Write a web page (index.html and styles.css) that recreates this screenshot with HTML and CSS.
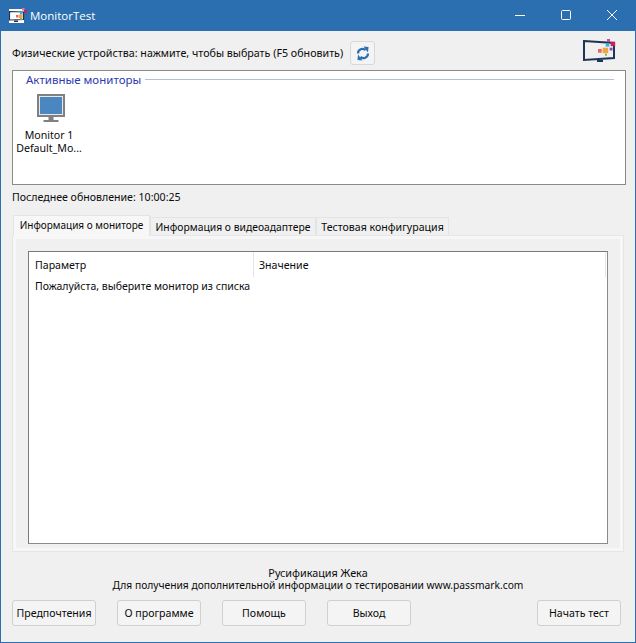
FILE: index.html
```html
<!DOCTYPE html>
<html lang="ru">
<head>
  <meta charset="UTF-8" />
  <title>MonitorTest</title>
  <link rel="stylesheet" href="styles.css">
</head>
<body>
  <div class="window">
    <header class="titlebar">
      <svg class="app-icon" width="18" height="16" viewBox="0 0 18 16">
        <rect x="0" y="1" width="15" height="14" fill="#fff"/>
        <path d="M.5 3.500l14 .5v7.500l-14 .5z" fill="#fff" stroke="#1f3557" stroke-width="1.200"/>
        <rect x="5" y="12.500" width="4" height="1.500" fill="#1f3557"/>
        <rect x="13" y="0" width="2.500" height="2.500" fill="#e070a8"/>
        <rect x="15" y="2" width="3" height="3" fill="#c9205c"/>
        <rect x="11" y="4" width="2.500" height="2.500" fill="#2fb0e8"/>
        <rect x="10" y="6.500" width="3.500" height="3.500" fill="#f2a445"/>
        <rect x="7" y="7" width="2.500" height="2.500" fill="#f0645c"/>
        <rect x="11" y="10" width="2" height="2" fill="#7cb944"/>
      </svg>
      <span class="app-title">MonitorTest</span>
      <div class="win-controls">
        <svg width="46" height="31" viewBox="0 0 46 31"><path d="M18 15.500h10" stroke="#fff" fill="none"/></svg>
        <svg width="46" height="31" viewBox="0 0 46 31"><rect x="18.500" y="10.500" width="9" height="9" rx="1" stroke="#fff" fill="none"/></svg>
        <svg width="46" height="31" viewBox="0 0 46 31"><path d="M18 10l10 10M28 10l-10 10" stroke="#fff" fill="none"/></svg>
      </div>
    </header>

    <main class="content">
      <div class="device-row">
        <span class="device-label">Физические устройства: нажмите, чтобы выбрать (F5 обновить)</span>
        <button class="refresh-btn">
          <svg width="14" height="15" viewBox="0 0 14 15">
            <path d="M2 7.500a4.500 4.500 0 0 1 7.500-3.400" fill="none" stroke="#2b6fb0" stroke-width="2.200"/>
            <path d="M7.500 .5l5 .5-.5 5.500z" fill="#2b6fb0"/>
            <path d="M12 7.500a4.500 4.500 0 0 1-7.500 3.400" fill="none" stroke="#2b6fb0" stroke-width="2.200"/>
            <path d="M6.500 14.500l-5-.5.5-5.500z" fill="#2b6fb0"/>
          </svg>
        </button>
        <svg class="brand-icon" width="33" height="24" viewBox="0 0 33 24">
          <path d="M1 2l30 2v15l-30 2z" fill="none" stroke="#1f3557" stroke-width="2"/>
          <rect x="14" y="21" width="6" height="2" fill="#1f3557"/>
          <rect x="24" y="0" width="3" height="3" fill="#d0498c"/>
          <rect x="27.700" y="2.700" width="4.500" height="4.500" fill="#c9205c"/>
          <rect x="22.700" y="4" width="3.600" height="3.600" fill="#2fb0e8"/>
          <rect x="26.700" y="8.700" width="2.800" height="2.800" fill="#8e4a9e"/>
          <rect x="19.700" y="8.700" width="5.500" height="5.500" fill="#f2a445"/>
          <rect x="15" y="10" width="3.700" height="3.700" fill="#f0645c"/>
          <rect x="22" y="14.700" width="2" height="2" fill="#7cb944"/>
        </svg>
      </div>

      <section class="monitors">
        <div class="group-title">
          <span>Активные мониторы</span>
          <div class="group-line"></div>
        </div>
        <div class="monitor-item">
          <svg width="30" height="30" viewBox="0 0 30 30">
            <rect x="1" y="1" width="26" height="21" fill="#4a86c0" stroke="#808080" stroke-width="2"/>
            <rect x="2.500" y="2.500" width="23" height="18" fill="none" stroke="#e8e8e8"/>
            <rect x="11.500" y="23" width="5" height="3" fill="#808080"/>
            <rect x="6.500" y="26" width="15" height="2" fill="#808080"/>
          </svg>
          <div>Monitor 1</div>
          <div>Default_Mo...</div>
        </div>
      </section>

      <div class="last-update">Последнее обновление: 10:00:25</div>

      <nav class="tabs">
        <div class="tab tab-monitor active">Информация о мониторе</div>
        <div class="tab tab-adapter">Информация о видеоадаптере</div>
        <div class="tab tab-config">Тестовая конфигурация</div>
      </nav>
      <section class="tab-pane">
        <div class="list">
          <div class="list-head">
            <div class="col-param">Параметр</div>
            <div class="col-value">Значение</div>
          </div>
          <div class="list-row">Пожалуйста, выберите монитор из списка</div>
        </div>
      </section>

      <div class="credits">
        <div class="credit-name">Русификация Жека</div>
        <div>Для получения дополнительной информации о тестировании www.passmark.com</div>
      </div>

      <div class="buttons">
        <button class="btn">Предпочтения</button>
        <button class="btn">О программе</button>
        <button class="btn">Помощь</button>
        <button class="btn">Выход</button>
        <button class="btn btn-start">Начать тест</button>
      </div>
    </main>
  </div>
</body>
</html>
```

FILE: styles.css
```css
* {margin:0; padding:0; box-sizing:border-box;}
html, body {width: 636px; height: 643px; overflow: hidden;}
body {font-family: "Noto Sans", sans-serif; font-size: 10.600px; color: #0a0a0a;}

.window {
  width: 636px;
  height: 643px;
  display: flex;
  flex-direction: column;
  background: #f0f0f0;
  border: solid #2b6fb0;
  border-width: 0 1px 1px 1px;
}

.titlebar {
  height: 31px;
  margin: 0 -1px;
  background: #2b6fb0;
  color: #fff;
  display: flex;
  align-items: center;
  padding-left: 9px;
}
.app-icon {margin-right: 3px;}
.app-title {font-family: "Open Sans", sans-serif; font-size: 11.500px;}
.win-controls {margin-left: auto; display: flex; height: 31px; margin-right: 1px;}

.content {flex: 1; padding: 0 9px 0 11px; display: flex; flex-direction: column;}

.device-row {
  height: 39px;
  display: flex;
  align-items: center;
  padding-top: 5px;
}
.device-label {font-size: 10.700px;}
.refresh-btn {
  width: 25px;
  height: 24px;
  margin-left: 7px;
  background: #f4f4f4;
  border: 1px solid #d8d8d8;
  border-radius: 3px;
  display: flex;
  align-items: center;
  justify-content: center;
}
.brand-icon {margin-left: auto; margin-top: -5px; margin-right: 10px;}

.monitors {
  height: 115px;
  background: #fff;
  border: 1px solid #8a8a8a;
  padding: 1px 11px 0 13px;
}
.group-title {display: flex; align-items: center; gap: 4px; color: #2b3ab0; font-size: 11.500px;}
.group-title span {white-space: nowrap;}
.group-line {flex: 1; height: 1px; background: #b4c0d8;}
.monitor-item {width: 68px; margin: 7px 0 0 -11px; text-align: center; line-height: 13px;}
.monitor-item svg {display: block; margin: 0 auto 5px; position: relative; left: 3px;}

.last-update {height: 30px; line-height: 25px;}

.tabs {display: flex; height: 20px; align-items: flex-end; padding-left: 1px; position: relative; z-index: 1;}
.tab {
  height: 18px;
  line-height: 18px;
  text-align: center;
  white-space: nowrap;
  background: #f0f0f0;
  border: 1px solid #e4e4e4;
  border-bottom: none;
}
.tab-monitor {width: 137px; font-size: 10px;}
.tab-adapter {width: 166px; font-size: 10.350px;}
.tab-config {width: 133px;}
.tab.active {height: 21px; line-height: 18px; background: #f7f7f7; margin-bottom: -1px;}

.tab-pane {
  height: 317px;
  margin-right: 2px;
  background: #f0f0f0;
  border: 4px solid #f7f7f7;
  outline: 1px solid #e6e6e6;
  outline-offset: -1px;
  padding: 12px 12px 4px;
}
.list {height: 293px; background: #fff; border: 1px solid; border-color: #7a7a7a #8a8a8a #8a8a8a #7a7a7a;}
.list-head {display: flex; height: 25px; line-height: 26px;}
.col-param {width: 225px; padding-left: 6px; border-right: 1px solid #e6e6e6;}
.col-value {flex: 1; padding-left: 5px; border-right: 1px solid #e6e6e6; margin-right: 1px;}
.list-row {padding-left: 6px; line-height: 16px; margin-top: 1px; font-size: 10.500px;}

.credits {text-align: center; font-size: 10.250px; margin-top: 14px; line-height: 13px; padding-right: 2px;}
.credit-name {font-size: 10.800px;}

.buttons {display: flex; margin-top: 8px;}
.btn {
  width: 84px;
  height: 26px;
  margin-right: 21px;
  font: inherit;
  color: #0a0a0a;
  background: #f4f4f4;
  border: 1px solid #d0d0d0;
  border-radius: 3px;
}
.btn-start {margin: 0 5px 0 auto;}
```
